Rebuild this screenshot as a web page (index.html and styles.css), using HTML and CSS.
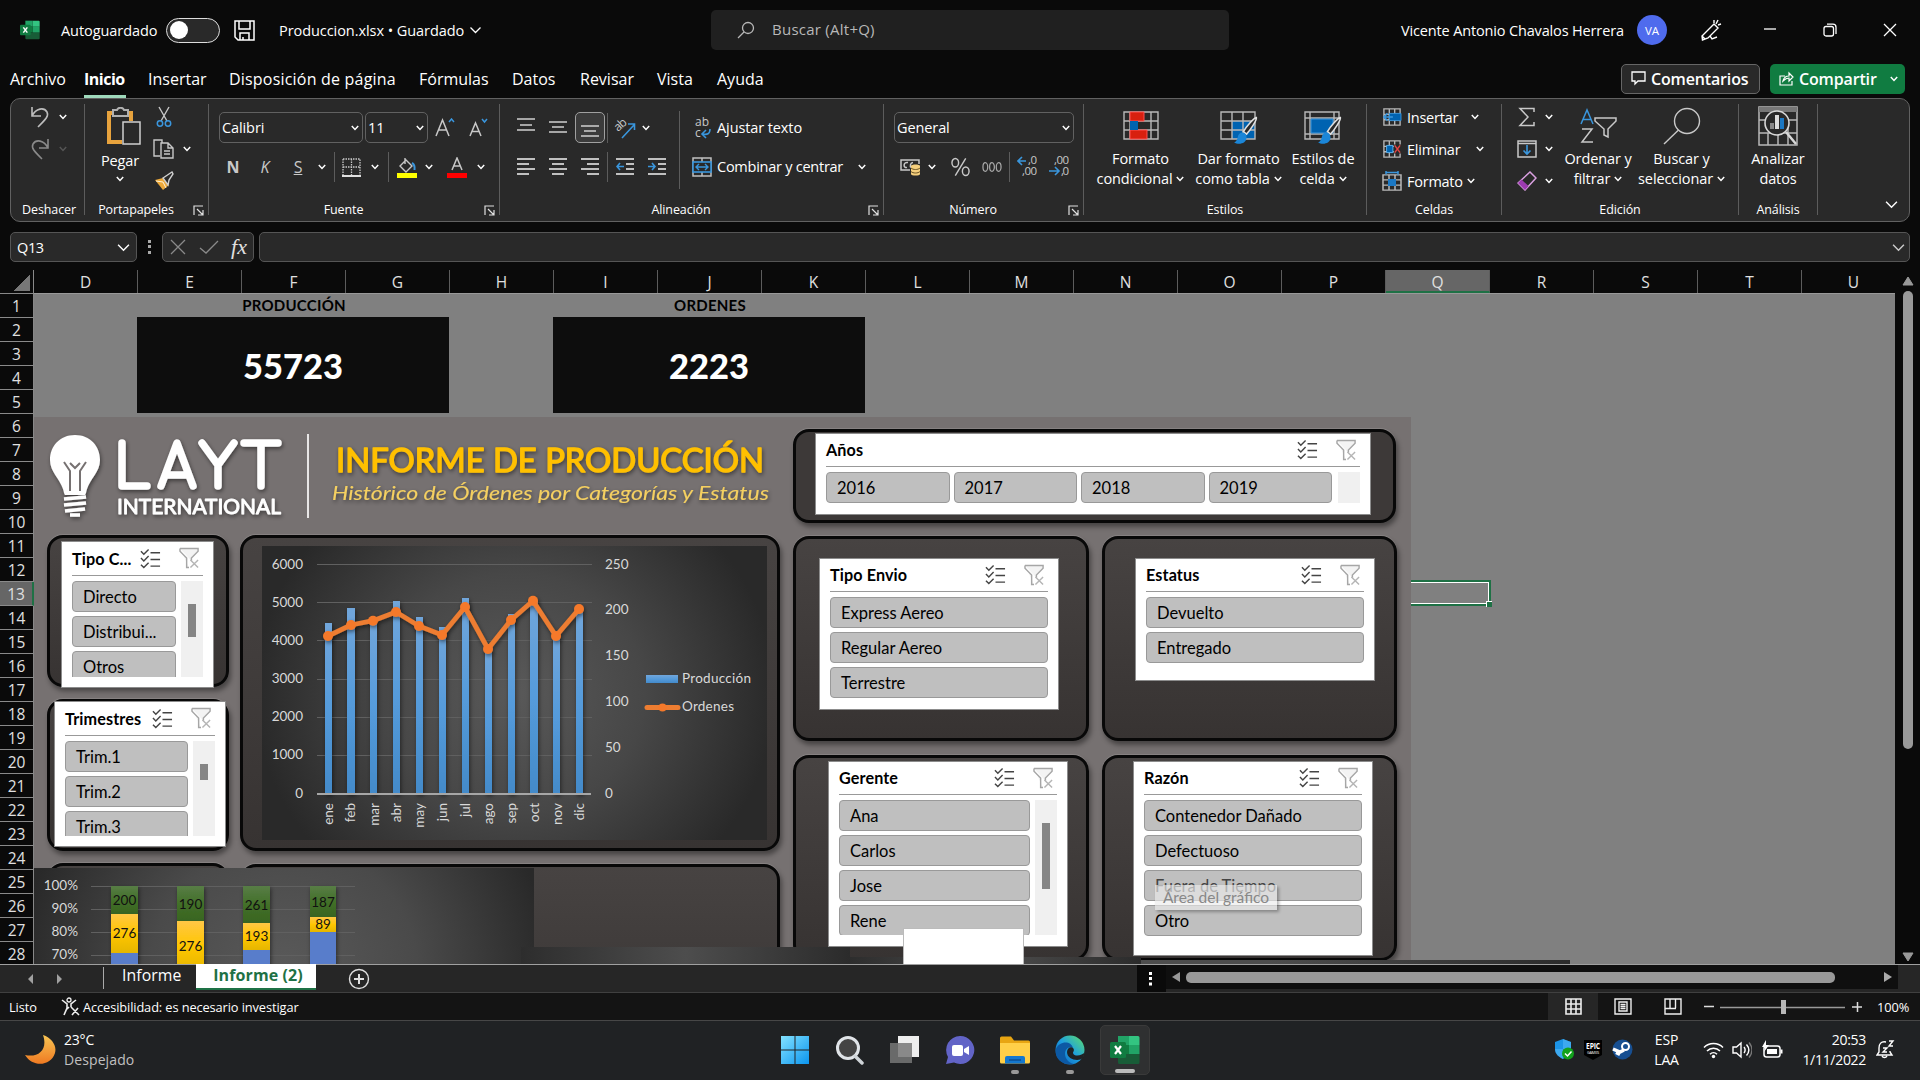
FILE: index.html
```html
<!DOCTYPE html>
<html lang="es">
<head>
<meta charset="utf-8">
<title>Produccion.xlsx - Excel</title>
<link rel="stylesheet" href="styles.css">
</head>
<body>
<svg class="defs" width="0" height="0">
  <defs>
    <linearGradient id="barBlue" x1="0" y1="0" x2="0" y2="1"><stop offset="0" stop-color="#71a6db"/><stop offset=".5" stop-color="#559bdb"/><stop offset="1" stop-color="#438ac9"/></linearGradient>
    <linearGradient id="barGreen" x1="0" y1="0" x2="0" y2="1"><stop offset="0" stop-color="#587d46"/><stop offset=".5" stop-color="#437029"/><stop offset="1" stop-color="#386420"/></linearGradient>
    <linearGradient id="barYellow" x1="0" y1="0" x2="0" y2="1"><stop offset="0" stop-color="#ffc746"/><stop offset=".5" stop-color="#ffc600"/><stop offset="1" stop-color="#e5b600"/></linearGradient>
    <linearGradient id="winBlue" x1="0" y1="0" x2="1" y2="1"><stop offset="0" stop-color="#83e2ff"/><stop offset="1" stop-color="#0b95ee"/></linearGradient>
    <linearGradient id="moonG" x1="0" y1="0" x2="0" y2="1"><stop offset="0" stop-color="#f8c553"/><stop offset="1" stop-color="#ef7a22"/></linearGradient>
    <linearGradient id="edgeG" x1="0" y1="1" x2="1" y2="0"><stop offset="0" stop-color="#0b59b5"/><stop offset=".5" stop-color="#1d9fe0"/><stop offset="1" stop-color="#5fe069"/></linearGradient>
    <filter id="soft" x="-20%" y="-20%" width="140%" height="140%"><feDropShadow dx="1" dy="2" stdDeviation="2" flood-color="#000" flood-opacity=".5"/></filter>
  </defs>
  <symbol id="chev" viewBox="0 0 8 6"><path d="M.8 1l3.2 3.4L7.2 1" fill="none" stroke="currentColor" stroke-width="1.500"/></symbol>
  <symbol id="chevthin" viewBox="0 0 12 8"><path d="M1 1.500l5 5 5-5" fill="none" stroke="currentColor" stroke-width="1.300"/></symbol>
  <symbol id="launch" viewBox="0 0 11 11"><path d="M1 10V1h9M4 4l6 6M10 5v5H5" fill="none" stroke="#e0e0e0" stroke-width="1.200"/></symbol>
  <symbol id="excel" viewBox="0 0 30 30"><path d="M8 1h11v9H8z" fill="#21a366"/><path d="M19 1h9a1.500 1.500 0 0 1 1.500 1.500V10H19z" fill="#33c481"/><path d="M8 10h11v9H8z" fill="#107c41"/><path d="M19 10h10.500v9H19z" fill="#21a366"/><path d="M8 19h21.500v8.500A1.500 1.500 0 0 1 28 29H9.500A1.500 1.500 0 0 1 8 27.500z" fill="#185c37"/><rect x="0" y="7" width="16" height="16" rx="1.500" fill="#107c41"/><path d="M5 11l6 8M11 11l-6 8" stroke="#fff" stroke-width="2.200"/></symbol>
  <symbol id="multi" viewBox="0 0 22 21"><path d="M1 3l3 3 5-5M1 10l3 3 5-5M1 17l3 3 5-5M11 4.500h10M11 11.500h10M11 18.500h10" fill="none" stroke="#444" stroke-width="1.500"/></symbol>
  <symbol id="nofilter" viewBox="0 0 22 22"><path d="M1 1h19v3l-7 7v3M1 1v3l7 7v10h2.500" fill="#f3f3f3" stroke="#a6a6a6" stroke-width="1.500"/><path d="M12 13l8 8M20 13l-8 8" stroke="#b5b5b5" stroke-width="1.500"/></symbol>
  <symbol id="cellgrid" viewBox="0 0 20 20"><path d="M1 1h18v18H1zM1 7h18M1 13h18M7 1v18M13 1v18" fill="none" stroke="#b8b8b8" stroke-width="1.500"/></symbol>
  <symbol id="brush" viewBox="0 0 24 28"><path d="M22.500 1.500C23 4 17 13 13 17.500l-3-2.500C13 10 20 2 22.500 1.500z" fill="#292929" stroke="#e0e0e0" stroke-width="1.500"/><path d="M9.500 16c-3 0-4.500 2-5 4.500C4 23 3 25 1 25.500c4 2.500 12 1.500 12-5 0-2-1-4-3.500-4.500z" fill="#1b86d8"/></symbol>
</svg>

<header class="titlebar">
  <svg class="app-icon" width="20" height="20"><use href="#excel"/></svg>
  <span class="t-auto">Autoguardado</span>
  <span class="toggle"><i></i></span>
  <svg class="save" width="21" height="21" viewBox="0 0 21 21"><path d="M1 1h19v19H4l-3-3zM5 1v8h11V1M6 20v-7h9v7M9 20v-3" fill="none" stroke="#fff" stroke-width="1.500"/></svg>
  <span class="t-file">Produccion.xlsx • Guardado</span>
  <svg class="file-chev" width="13" height="8"><use href="#chevthin"/></svg>
  <div class="search">
    <svg width="18" height="18" viewBox="0 0 18 18"><circle cx="11" cy="7" r="5.500" fill="none" stroke="#b8b8b8" stroke-width="1.300"/><path d="M7 11l-6 6" stroke="#b8b8b8" stroke-width="1.300"/></svg>
    <span>Buscar (Alt+Q)</span>
  </div>
  <span class="user">Vicente Antonio Chavalos Herrera</span>
  <span class="avatar">VA</span>
  <svg class="pen" width="22" height="22" viewBox="0 0 22 22"><path d="M2 17L14 5l4 4L8 19l-5.500 2zM5 20l-3-3M10 17l2 3 5-2M14 1v3M18 1l-2 4M21 5l-3 1" fill="none" stroke="#fff" stroke-width="1.400"/></svg>
  <svg class="wb" width="14" height="14" viewBox="0 0 14 14"><path d="M1 6h12" stroke="#fff" stroke-width="1.300"/></svg>
  <svg class="wb" width="14" height="14" viewBox="0 0 14 14"><rect x="1" y="3.500" width="9.500" height="9.500" rx="2" fill="none" stroke="#fff" stroke-width="1.300"/><path d="M4 1.200h6a3 3 0 0 1 3 3V11" fill="none" stroke="#fff" stroke-width="1.300"/></svg>
  <svg class="wb" width="14" height="14" viewBox="0 0 14 14"><path d="M1 1l12 12M13 1L1 13" stroke="#fff" stroke-width="1.300"/></svg>
</header>

<nav class="tabs">
  <span>Archivo</span><span class="on">Inicio</span><span>Insertar</span><span class="disp">Disposición de página</span><span>Fórmulas</span><span>Datos</span><span>Revisar</span><span>Vista</span><span>Ayuda</span>
  <span class="btn comments"><svg width="15" height="15" viewBox="0 0 15 15"><path d="M1 1h13v9H7l-3 3v-3H1z" fill="none" stroke="#fff" stroke-width="1.300"/></svg>Comentarios</span>
  <span class="btn share"><svg width="15" height="15" viewBox="0 0 15 15"><path d="M6 5H1v9h12v-4M4 10c1-4 3-5 6-5V2l4 4-4 4V7C8 7 6 8 4 10z" fill="none" stroke="#fff" stroke-width="1.200"/></svg>Compartir<svg class="sc" width="8" height="6"><use href="#chev"/></svg></span>
</nav>

<section class="ribbon">
  <div class="group g-undo">
    <div class="body">
      <div class="r-undo"><svg width="20" height="22" viewBox="0 0 20 22"><path d="M2 1v9h9M2 10C6 2 14 1 17 6c2 4-1 7-9 15" fill="none" stroke="#bdbdbd" stroke-width="1.600"/></svg><svg width="8" height="6"><use href="#chev"/></svg></div>
      <div class="r-undo dim"><svg width="20" height="22" viewBox="0 0 20 22"><path d="M18 1v9H9M18 10C14 2 6 1 3 6c-2 4 1 7 9 15" fill="none" stroke="#8a8a8a" stroke-width="1.600"/></svg><svg width="8" height="6"><use href="#chev"/></svg></div>
    </div>
    <div class="label">Deshacer</div>
  </div>
  <div class="group g-clip">
    <div class="body">
      <div class="big paste">
        <svg width="36" height="39" viewBox="0 0 36 39"><path d="M7 6H3v29h13M25 14V6h-4" fill="none" stroke="#e8a33d" stroke-width="4"/><path d="M7 3h4c1-3 6-3 7 0h4v6H7z" fill="#292929" stroke="#b0b0b0" stroke-width="2"/><rect x="17" y="15" width="17" height="22" fill="#292929" stroke="#d0d0d0" stroke-width="1.500"/></svg>
        <span>Pegar</span><svg width="8" height="6"><use href="#chev"/></svg>
      </div>
      <div class="col">
        <div class="r-clip"><svg width="16" height="22" viewBox="0 0 16 22"><path d="M3 1l8 14M13 1L5 15" stroke="#c8c8c8" stroke-width="1.400"/><circle cx="4" cy="17.500" r="2.700" fill="none" stroke="#3a96dd" stroke-width="1.500"/><circle cx="12" cy="17.500" r="2.700" fill="none" stroke="#3a96dd" stroke-width="1.500"/></svg></div>
        <div class="r-clip"><svg width="22" height="20" viewBox="0 0 22 20"><path d="M7 17H1V1h8v3M8 4h7l5 5v10H8zM15 4v5h5M11 12h6M11 15h6" fill="none" stroke="#c8c8c8" stroke-width="1.400"/></svg><svg width="8" height="6"><use href="#chev"/></svg></div>
        <div class="r-clip"><svg width="20" height="20" viewBox="0 0 20 20"><path d="M1 9l8-2 6 7-6 5z" fill="#eba83a"/><path d="M2 10l7 1 3 6" fill="none" stroke="#fff3d6"/><path d="M9 7l3-2 6-4 1 2-4 6-1 5z" fill="#292929" stroke="#d0d0d0" stroke-width="1.400"/></svg></div>
      </div>
    </div>
    <div class="label">Portapapeles<svg width="11" height="11"><use href="#launch"/></svg></div>
  </div>
  <div class="group g-font">
    <div class="body stack">
      <div class="r-font1">
        <div class="combo">Calibri<svg width="8" height="6"><use href="#chev"/></svg></div>
        <div class="combo">11<svg width="8" height="6"><use href="#chev"/></svg></div>
        <svg width="20" height="20" viewBox="0 0 20 20"><path d="M1 18L7.500 2 14 18M3.500 12h8" fill="none" stroke="#c8c8c8" stroke-width="1.500"/><path d="M14 4l2.500-3L19 4" fill="none" stroke="#3a96dd" stroke-width="1.500"/></svg>
        <svg width="20" height="20" viewBox="0 0 20 20"><path d="M1 18L6.500 5 12 18M3 13.500h7" fill="none" stroke="#c8c8c8" stroke-width="1.500"/><path d="M13 1l2.500 3L18 1" fill="none" stroke="#3a96dd" stroke-width="1.500"/></svg>
      </div>
      <div class="r-font2">
        <b>N</b><i>K</i><u>S</u><svg width="8" height="6"><use href="#chev"/></svg><em class="end"></em>
        <svg width="19" height="19" viewBox="0 0 19 19"><path d="M1 1h17v16M1 1v16M9.500 1v16M1 9h17" fill="none" stroke="#c8c8c8" stroke-width="1.300" stroke-dasharray="1.500 1"/><path d="M0 18h19" stroke="#e0e0e0" stroke-width="2"/></svg>
        <svg width="8" height="6"><use href="#chev"/></svg><em></em>
        <svg width="22" height="21" viewBox="0 0 22 21"><path d="M9 1v6M10 3l6 6-6 6-6-6z" fill="none" stroke="#c8c8c8" stroke-width="1.400"/><path d="M16 6c2 1 3 3 2.500 7" fill="none" stroke="#3a96dd" stroke-width="2"/><path d="M1 16h20v5H1z" fill="#ff0"/></svg>
        <svg width="8" height="6"><use href="#chev"/></svg>
        <svg width="20" height="21" viewBox="0 0 20 21"><path d="M5 13l5-12 5 12M6.500 9h7" fill="none" stroke="#c8c8c8" stroke-width="1.500"/><path d="M0 16h20v5H0z" fill="red"/></svg>
        <svg width="8" height="6"><use href="#chev"/></svg>
      </div>
    </div>
    <div class="label">Fuente<svg width="11" height="11"><use href="#launch"/></svg></div>
  </div>
  <div class="group g-align">
    <div class="body">
      <div class="stack">
        <div class="r-al">
          <svg width="18" height="20" viewBox="0 0 18 20"><path d="M0 1h18M3 7h12M0 12h18" stroke="#d0d0d0" stroke-width="1.500"/></svg>
          <svg width="18" height="20" viewBox="0 0 18 20"><path d="M0 4h18M3 9h12M0 14h18" stroke="#d0d0d0" stroke-width="1.500"/></svg>
          <span class="sel"><svg width="18" height="20" viewBox="0 0 18 20"><path d="M0 8h18M3 13h12M0 18h18" stroke="#d0d0d0" stroke-width="1.500"/></svg></span><em></em>
          <svg width="22" height="22" viewBox="0 0 22 22"><text x="4" y="15" transform="rotate(-42 4 15)" font-size="12" textLength="13" fill="#c8c8c8">ab</text><path d="M8 21L20 8M14 7h6.500v6" fill="none" stroke="#3a96dd" stroke-width="1.600"/></svg>
          <svg width="8" height="6"><use href="#chev"/></svg>
        </div>
        <div class="r-al r-al2">
          <svg width="18" height="18" viewBox="0 0 18 18"><path d="M0 1h18M0 6h12M0 11h18M0 16h12" stroke="#c0c0c0" stroke-width="1.800"/></svg>
          <svg width="18" height="18" viewBox="0 0 18 18"><path d="M0 1h18M3 6h12M0 11h18M3 16h12" stroke="#c0c0c0" stroke-width="1.800"/></svg>
          <svg width="18" height="18" viewBox="0 0 18 18"><path d="M0 1h18M6 6h12M0 11h18M6 16h12" stroke="#c0c0c0" stroke-width="1.800"/></svg><em></em>
          <svg width="18" height="18" viewBox="0 0 18 18"><path d="M0 1h18M10 6h8M10 11h8M0 16h18" stroke="#c0c0c0" stroke-width="1.800"/><path d="M8 8.500H1M4 5L1 8.500 4 12" fill="none" stroke="#3a96dd" stroke-width="1.600"/></svg>
          <svg width="18" height="18" viewBox="0 0 18 18"><path d="M0 1h18M10 6h8M10 11h8M0 16h18" stroke="#c0c0c0" stroke-width="1.800"/><path d="M0 8.500h7M4 5l3 3.500L4 12" fill="none" stroke="#3a96dd" stroke-width="1.600"/></svg>
        </div>
      </div>
      <em class="tall"></em>
      <div class="stack wide">
        <div class="r-w1"><svg width="20" height="22" viewBox="0 0 20 22"><text x="3" y="9" font-size="12" textLength="14" fill="#c8c8c8">ab</text><text x="3" y="20" font-size="12" fill="#c8c8c8">c</text><path d="M18 12c0 5-3 6-7 5M14 13l-4 4 4 4" fill="none" stroke="#3a96dd" stroke-width="1.600"/></svg><span>Ajustar texto</span></div>
        <div class="r-w1"><svg width="20" height="20" viewBox="0 0 20 20"><path d="M1 1h18v18H1zM10 1v18" fill="none" stroke="#c0c0c0" stroke-width="1.500"/><rect x="1" y="5" width="18" height="10" fill="#292929" stroke="#3a96dd" stroke-width="1.600"/><path d="M4 10h12M7 7l-3 3 3 3M13 7l3 3-3 3" fill="none" stroke="#3a96dd" stroke-width="1.400"/></svg><span class="comb">Combinar y centrar</span><svg width="8" height="6"><use href="#chev"/></svg></div>
      </div>
    </div>
    <div class="label">Alineación<svg width="11" height="11"><use href="#launch"/></svg></div>
  </div>
  <div class="group g-num">
    <div class="body stack">
      <div class="r-num1"><div class="combo">General<svg width="8" height="6"><use href="#chev"/></svg></div></div>
      <div class="r-num2">
        <svg width="21" height="20" viewBox="0 0 21 20"><path d="M10 13H1V3h18v4M8 5.500c-5-1-5 6-1 5M13 5.500c-3 0-3 4-2 5" fill="none" stroke="#c8c8c8" stroke-width="1.500"/><path d="M11 9c0-2 9-2 9 0v8c0 2-9 2-9 0z" fill="#f5cf7d"/><path d="M11 11c2 2 7 2 9 0M11 14.500c2 2 7 2 9 0" fill="none" stroke="#6b5425"/></svg>
        <svg width="8" height="6"><use href="#chev"/></svg>
        <svg width="19" height="20" viewBox="0 0 20 20"><ellipse cx="4.500" cy="5.500" rx="3.500" ry="4.500" fill="none" stroke="#c8c8c8" stroke-width="1.500"/><ellipse cx="15.500" cy="14.500" rx="3.500" ry="4.500" fill="none" stroke="#c8c8c8" stroke-width="1.500"/><path d="M15.500 1l-11 18" stroke="#c8c8c8" stroke-width="1.500"/></svg>
        <svg width="20" height="12" viewBox="0 0 21 12"><path d="M1 6a2.500 4.500 0 0 1 5 0a2.500 4.500 0 0 1-5 0zM8 6a2.500 4.500 0 0 1 5 0a2.500 4.500 0 0 1-5 0zM15 6a2.500 4.500 0 0 1 5 0a2.500 4.500 0 0 1-5 0z" fill="none" stroke="#a8a8a8" stroke-width="1.300"/></svg>
        <em></em>
        <svg width="21" height="22" viewBox="0 0 21 22"><text x="11" y="8" font-size="11.500" fill="#c8c8c8" textLength="9">,0</text><text x="5" y="19" font-size="11.500" fill="#c8c8c8" textLength="15">,00</text><path d="M9 5H1M5 1L1 5l4 4" fill="none" stroke="#3a96dd" stroke-width="1.600"/></svg>
        <svg width="21" height="22" viewBox="0 0 21 22"><text x="5" y="8" font-size="11.500" fill="#c8c8c8" textLength="15">,00</text><text x="12" y="19" font-size="11.500" fill="#c8c8c8" textLength="8">,0</text><path d="M0 15h10M6 11l4 4-4 4" fill="none" stroke="#3a96dd" stroke-width="1.600"/></svg>
      </div>
    </div>
    <div class="label">Número<svg width="11" height="11"><use href="#launch"/></svg></div>
  </div>
  <div class="group g-styles">
    <div class="body">
      <div class="big"><svg width="36" height="38" viewBox="0 0 36 38"><path d="M1 5h34v27H1zM1 14h34M1 23h34M7 5v27M14 5v27M28 5v27" fill="none" stroke="#b8b8b8" stroke-width="1.400"/><path d="M7 5h14v9H7zM7 23h17v9H7z" fill="#d8200f" stroke="#ff5050"/><path d="M7 14h8v9H7z" fill="#0063b1"/></svg><span>Formato</span><span>condicional<svg width="8" height="6"><use href="#chev"/></svg></span></div>
      <div class="big"><svg width="38" height="38" viewBox="0 0 38 38"><path d="M12 14h23v18H12z" fill="#0063b1"/><path d="M1 5h34v27H1zM1 14h34M1 23h34M12 5v27M23 5v27" fill="none" stroke="#b8b8b8" stroke-width="1.400"/><use href="#brush" x="13" y="9" width="25" height="29"/></svg><span>Dar formato</span><span>como tabla<svg width="8" height="6"><use href="#chev"/></svg></span></div>
      <div class="big"><svg width="38" height="38" viewBox="0 0 38 38"><path d="M1 5h34v27H1zM1 11h34M6 5v27M30 5v27M1 27h34" fill="none" stroke="#b8b8b8" stroke-width="1.400"/><path d="M7 12h22v14H7z" fill="#0063b1" stroke="#3a96dd"/><use href="#brush" x="13" y="9" width="25" height="29"/></svg><span>Estilos de</span><span>celda<svg width="8" height="6"><use href="#chev"/></svg></span></div>
    </div>
    <div class="label">Estilos</div>
  </div>
  <div class="group g-cells">
    <div class="body triple">
      <div class="r-cell c1"><svg width="20" height="18" viewBox="0 0 20 20"><use href="#cellgrid"/><path d="M7 6h13v8H7z" fill="#0063b1" stroke="#3a96dd"/><path d="M11 10H1M5 6l-4 4 4 4" fill="none" stroke="#3a96dd" stroke-width="1.700"/></svg><span>Insertar</span><svg width="8" height="6"><use href="#chev"/></svg></div>
      <div class="r-cell c2"><svg width="20" height="18" viewBox="0 0 20 20"><use href="#cellgrid"/><path d="M12 5h8v10h-8z" fill="#292929"/><path d="M4 6h7v8H4z" fill="#0063b1" stroke="#60b5f0"/><path d="M13 6l6 8M19 6l-6 8" stroke="#e84545" stroke-width="1.600"/></svg><span>Eliminar</span><svg width="8" height="6"><use href="#chev"/></svg></div>
      <div class="r-cell c3"><svg width="20" height="20" viewBox="0 0 20 20"><g transform="translate(0,3) scale(1,.85)"><use href="#cellgrid" width="20" height="20"/></g><path d="M4 1.500h12M4 0v3.500M16 0v3.500" stroke="#3a96dd" stroke-width="1.500"/><path d="M6 8h8v7H6z" fill="#1b78c4"/></svg><span>Formato</span><svg width="8" height="6"><use href="#chev"/></svg></div>
    </div>
    <div class="label">Celdas</div>
  </div>
  <div class="group g-edit">
    <div class="body">
      <div class="col">
        <div class="r-ed"><svg width="18" height="20" viewBox="0 0 18 20"><path d="M16 5V1.500H2L10 10 2 18.500h14V15" fill="none" stroke="#c8c8c8" stroke-width="1.500"/></svg><svg width="8" height="6"><use href="#chev"/></svg></div>
        <div class="r-ed"><svg width="20" height="18" viewBox="0 0 20 18"><path d="M1 1h18v16H1zM1 3.500h18" fill="none" stroke="#c8c8c8" stroke-width="1.500"/><path d="M10 5v9M6.500 10.500L10 14l3.500-3.500" fill="none" stroke="#3a96dd" stroke-width="1.600"/></svg><svg width="8" height="6"><use href="#chev"/></svg></div>
        <div class="r-ed"><svg width="20" height="20" viewBox="0 0 20 20"><path d="M13 1l6 6-11 12-7-7z" fill="none" stroke="#d9a0e0" stroke-width="1.500"/><path d="M4.500 8.500L11.500 15 8 19l-7-7z" fill="#9c3bb0"/></svg><svg width="8" height="6"><use href="#chev"/></svg></div>
      </div>
      <div class="big"><svg width="38" height="38" viewBox="0 0 38 38"><path d="M2 17L8 3l6 14M4 12.500h8" fill="none" stroke="#3a96dd" stroke-width="1.500"/><path d="M3 22h10L3 35h11" fill="none" stroke="#c8c8c8" stroke-width="1.500"/><path d="M16 11h21v3l-8 8v8l-4-2v-6l-9-8z" fill="none" stroke="#c8c8c8" stroke-width="1.500"/></svg><span>Ordenar y</span><span>filtrar<svg width="8" height="6"><use href="#chev"/></svg></span></div>
      <div class="big"><svg width="38" height="38" viewBox="0 0 38 38"><circle cx="24" cy="14" r="12.500" fill="none" stroke="#c8c8c8" stroke-width="1.400"/><path d="M15.500 23L1 37" stroke="#c8c8c8" stroke-width="1.400"/></svg><span>Buscar y</span><span>seleccionar<svg width="8" height="6"><use href="#chev"/></svg></span></div>
    </div>
    <div class="label">Edición</div>
  </div>
  <div class="group g-an">
    <div class="body">
      <div class="big"><svg width="40" height="40" viewBox="0 0 40 40"><path d="M1 1h38v38H1zM1 14h38M1 27h38M10 27v12M20 27v12M30 20v19" fill="none" stroke="#b8b8b8" stroke-width="1.500"/><path d="M1 1h38v5H1z" fill="#777"/><circle cx="19" cy="17" r="12" fill="#292929" stroke="#d8d8d8" stroke-width="1.600"/><path d="M12 17h4v6h-4z" fill="#888"/><path d="M17 9h4v14h-4z" fill="#ddd"/><path d="M22 12h4v11h-4z" fill="#1b78c4"/><path d="M28 26l10 12" stroke="#d8d8d8" stroke-width="2.500"/></svg><span>Analizar</span><span>datos</span></div>
    </div>
    <div class="label">Análisis</div>
  </div>
  <svg class="collapse" width="13" height="9"><use href="#chevthin"/></svg>
</section>

<section class="formula">
  <div class="fbox name">Q13<svg width="13" height="9"><use href="#chevthin"/></svg></div>
  <svg class="dots" width="4" height="16" viewBox="0 0 4 16"><path d="M0 1h3v3H0zM0 6h3v3H0zM0 12h3v3H0z" fill="#aaa"/></svg>
  <div class="fbox fx"><svg width="16" height="16" viewBox="0 0 16 16"><path d="M1 1l14 14M15 1L1 15" stroke="#8a8a8a" stroke-width="1.300"/></svg><svg width="20" height="14" viewBox="0 0 20 14"><path d="M1 8l6 5L19 1" fill="none" stroke="#8a8a8a" stroke-width="1.300"/></svg><i>fx</i></div>
  <div class="fbox bar"><svg width="13" height="9"><use href="#chevthin"/></svg></div>
</section>

<main class="sheet">
  <div class="left">
    <div class="corner"></div>
    <div class="rows"><span>1</span><span>2</span><span>3</span><span>4</span><span>5</span><span>6</span><span>7</span><span>8</span><span>9</span><span>10</span><span>11</span><span>12</span><span class="on">13</span><span>14</span><span>15</span><span>16</span><span>17</span><span>18</span><span>19</span><span>20</span><span>21</span><span>22</span><span>23</span><span>24</span><span>25</span><span>26</span><span>27</span><span>28</span></div>
  </div>
  <div class="mid">
    <div class="cols"><span>D</span><span>E</span><span>F</span><span>G</span><span>H</span><span>I</span><span>J</span><span>K</span><span>L</span><span>M</span><span>N</span><span>O</span><span>P</span><span class="on">Q</span><span>R</span><span>S</span><span>T</span><span>U</span></div>
    <div class="canvas">
      <div class="kpis">
        <div class="kpi"><b>PRODUCCIÓN</b><div>55723</div></div>
        <div class="kpi"><b>ORDENES</b><div>2223</div></div>
      </div>
      <div class="cellsel"><i></i></div>
      <div class="dash"></div>
      <svg class="brand" width="760" height="110" viewBox="34 422 760 110">
        <g filter="url(#soft)">
          <path d="M75 435c-15 0-25 11-25 25 0 12 10 19 13 29 1 3 1 5 2 6h20c1-1 1-3 2-6 3-10 13-17 13-29 0-14-10-25-25-25z" fill="#fff"/>
          <path d="M64 462l6 9v20M86 462l-6 9v20M70 463l5 5 5-5" fill="none" stroke="#767171" stroke-width="2"/>
          <path d="M64 499l22-2M64 505l22-2M65 511l20-2M70 515h10" stroke="#fff" stroke-width="3.500"/>
          <g fill="none" stroke="#fff" stroke-width="7.500" stroke-linecap="round" stroke-linejoin="round"><path d="M122 443v43h25"/><path d="M161 486l16-43 16 43M167 475h20"/><path d="M202 443l16 22 16-22M218 465v21"/><path d="M244 443h34M261 443v43"/></g>
          <text x="117" y="513.500" textLength="164" lengthAdjust="spacingAndGlyphs" font-size="21" fill="#fff" stroke="#fff" stroke-width=".9" stroke-linejoin="round">INTERNATIONAL</text>
          <text x="336" y="472" textLength="428" lengthAdjust="spacingAndGlyphs" font-size="32" fill="#ffc000" stroke="#ffc000" stroke-width="1.300" stroke-linejoin="round">INFORME DE PRODUCCIÓN</text>
          <text x="332" y="500" textLength="437" lengthAdjust="spacingAndGlyphs" font-size="20" font-style="italic" fill="#f5d060">Histórico de Órdenes por Categorías y Estatus</text>
        </g>
        <path d="M308 434v84" stroke="#e8e6e6" stroke-width="2"/>
      </svg>
      <div class="panel p-anos"></div><div class="panel p-envio"></div><div class="panel p-estatus"></div><div class="panel p-gerente"></div><div class="panel p-razon"></div><div class="panel p-tipo"></div><div class="panel p-trim"></div><div class="panel p-chart"></div><div class="panel p-low1"></div><div class="panel p-low2"></div>

      <svg class="chart" width="505" height="294" viewBox="262 546 505 294">
        <path d="M317 564.500h275M317 602.500h275M317 640.500h275M317 679.500h275M317 717.500h275M317 755.500h275" stroke="#606060"/>
        <g fill="url(#barBlue)" filter="url(#soft)"><rect x="325" y="623" width="7" height="171"/><rect x="347" y="608" width="8" height="186"/><rect x="370" y="622" width="7" height="172"/><rect x="393" y="601" width="7" height="193"/><rect x="416" y="617" width="7" height="177"/><rect x="439" y="627" width="7" height="167"/><rect x="462" y="598" width="7" height="196"/><rect x="485" y="650" width="7" height="144"/><rect x="508" y="614" width="7" height="180"/><rect x="530" y="601" width="8" height="193"/><rect x="553" y="637" width="7" height="157"/><rect x="576" y="612" width="7" height="182"/></g>
        <path d="M317 794h274" stroke="#a6a6a6" stroke-width="2"/>
        <g filter="url(#soft)"><path d="M328 636L351 625L373 620.700L396 612L419 626L442 635L465 607L488 649L511 620L533 600.700L556 636L579 609" fill="none" stroke="#ed7d31" stroke-width="4.800" stroke-linejoin="round"/>
        <g fill="#f5792a"><circle cx="328" cy="636" r="5"/><circle cx="351" cy="625" r="5"/><circle cx="373" cy="620.700" r="5"/><circle cx="396" cy="612" r="5"/><circle cx="419" cy="626" r="5"/><circle cx="442" cy="635" r="5"/><circle cx="465" cy="607" r="5"/><circle cx="488" cy="649" r="5"/><circle cx="511" cy="620" r="5"/><circle cx="533" cy="600.700" r="5"/><circle cx="556" cy="636" r="5"/><circle cx="579" cy="609" r="5"/></g></g>
        <g class="ax" text-anchor="end"><text x="303" y="568.500">6000</text><text x="303" y="607">5000</text><text x="303" y="645">4000</text><text x="303" y="683">3000</text><text x="303" y="721">2000</text><text x="303" y="759">1000</text><text x="303" y="798">0</text></g>
        <g class="ax"><text x="605" y="568.500">250</text><text x="605" y="614">200</text><text x="605" y="660">150</text><text x="605" y="706">100</text><text x="605" y="752">50</text><text x="605" y="798">0</text></g>
        <g class="ax" text-anchor="end"><text transform="translate(333,803) rotate(-90)">ene</text><text transform="translate(355,803) rotate(-90)">feb</text><text transform="translate(378.500,803) rotate(-90)">mar</text><text transform="translate(401,803) rotate(-90)">abr</text><text transform="translate(424,803) rotate(-90)">may</text><text transform="translate(447,803) rotate(-90)">jun</text><text transform="translate(470,803) rotate(-90)">jul</text><text transform="translate(493,803) rotate(-90)">ago</text><text transform="translate(516,803) rotate(-90)">sep</text><text transform="translate(538.500,803) rotate(-90)">oct</text><text transform="translate(562,803) rotate(-90)">nov</text><text transform="translate(584,803) rotate(-90)">dic</text></g>
        <rect x="646" y="675" width="32" height="8" fill="url(#barBlue)"/><path d="M647 707.500h31" stroke="#ed7d31" stroke-width="5" stroke-linecap="round"/><circle cx="662.500" cy="707.500" r="4" fill="#f5792a"/>
        <g class="ax"><text x="682" y="683" textLength="69">Producción</text><text x="682" y="711" textLength="52">Ordenes</text></g>
      </svg>

      <div class="slicer s-anos"><header><b>Años</b><svg width="21" height="21"><use href="#multi"/></svg><svg width="21" height="22"><use href="#nofilter"/></svg></header><div class="items"><div class="list"><span>2016</span><span>2017</span><span>2018</span><span>2019</span></div><div class="scroll"></div></div></div>
      <div class="slicer s-envio"><header><b>Tipo Envio</b><svg width="21" height="21"><use href="#multi"/></svg><svg width="21" height="22"><use href="#nofilter"/></svg></header><div class="items"><div class="list"><span>Express Aereo</span><span>Regular Aereo</span><span>Terrestre</span></div></div></div>
      <div class="slicer s-estatus"><header><b>Estatus</b><svg width="21" height="21"><use href="#multi"/></svg><svg width="21" height="22"><use href="#nofilter"/></svg></header><div class="items"><div class="list"><span>Devuelto</span><span>Entregado</span></div></div></div>
      <div class="slicer s-gerente"><header><b>Gerente</b><svg width="21" height="21"><use href="#multi"/></svg><svg width="21" height="22"><use href="#nofilter"/></svg></header><div class="items"><div class="list"><span>Ana</span><span>Carlos</span><span>Jose</span><span>Rene</span></div><div class="scroll"><i></i></div></div></div>
      <div class="slicer s-razon"><header><b>Razón</b><svg width="21" height="21"><use href="#multi"/></svg><svg width="21" height="22"><use href="#nofilter"/></svg></header><div class="items"><div class="list"><span>Contenedor Dañado</span><span>Defectuoso</span><span class="faded">Fuera de Tiempo</span><span>Otro</span></div></div></div>
      <div class="slicer s-tipo"><header><b>Tipo C...</b><svg width="21" height="21"><use href="#multi"/></svg><svg width="21" height="22"><use href="#nofilter"/></svg></header><div class="items"><div class="list"><span>Directo</span><span>Distribui...</span><span>Otros</span></div><div class="scroll"><i></i></div></div></div>
      <div class="slicer s-trim"><header><b>Trimestres</b><svg width="21" height="21"><use href="#multi"/></svg><svg width="21" height="22"><use href="#nofilter"/></svg></header><div class="items"><div class="list"><span>Trim.1</span><span>Trim.2</span><span>Trim.3</span></div><div class="scroll"><i></i></div></div></div>

      <div class="tip">Área del gráfico</div>
      <svg class="stacked" width="500" height="97" viewBox="34 868 500 97">
        <path d="M91 886.500h264M91 909.500h264M91 932.500h264M91 955.500h264" stroke="#606060"/>
        <g filter="url(#soft)"><rect x="111" y="886" width="27" height="28" fill="url(#barGreen)"/><rect x="111" y="914" width="27" height="39" fill="url(#barYellow)"/><rect x="111" y="953" width="27" height="20" fill="#587dcb"/>
        <rect x="177" y="886" width="27" height="35" fill="url(#barGreen)"/><rect x="177" y="921" width="27" height="50" fill="url(#barYellow)"/>
        <rect x="243" y="886" width="27" height="37" fill="url(#barGreen)"/><rect x="243" y="923" width="27" height="27" fill="url(#barYellow)"/><rect x="243" y="950" width="27" height="20" fill="#587dcb"/>
        <rect x="310" y="886" width="26" height="31" fill="url(#barGreen)"/><rect x="310" y="917" width="26" height="15" fill="url(#barYellow)"/><rect x="310" y="932" width="26" height="40" fill="#587dcb"/></g>
        <g class="ax" text-anchor="end"><text x="78" y="890">100%</text><text x="78" y="913">90%</text><text x="78" y="936">80%</text><text x="78" y="959">70%</text></g>
        <g class="ax dark" text-anchor="middle"><text x="124.500" y="905">200</text><text x="124.500" y="938">276</text><text x="190.500" y="909">190</text><text x="190.500" y="951">276</text><text x="256.500" y="910">261</text><text x="256.500" y="941">193</text><text x="323" y="907">187</text><text x="323" y="929">89</text></g>
      </svg>
      <div class="strip st3"></div><div class="strip st2"></div><div class="strip st1"></div>
      <div class="blank"></div>
    </div>
  </div>
  <div class="vscroll">
    <svg width="12" height="10" viewBox="0 0 12 10"><path d="M6 1l5 8H1z" fill="#999" stroke="#999" stroke-linejoin="round"/></svg><i></i>
    <svg width="12" height="10" viewBox="0 0 12 10"><path d="M6 9L1 1h10z" fill="#999" stroke="#999" stroke-linejoin="round"/></svg>
  </div>
</main>

<section class="sheettabs">
  <svg class="nav1" width="36" height="12" viewBox="0 0 36 12"><path d="M6 1v10L1 6zM30 1v10l5-5z" fill="#a0a0a0"/></svg>
  <span class="t1">Informe</span><span class="t2">Informe (2)</span>
  <svg class="plus" width="22" height="22" viewBox="0 0 22 22"><circle cx="11" cy="11" r="9.500" fill="none" stroke="#e0e0e0" stroke-width="1.400"/><path d="M11 6v10M6 11h10" stroke="#e0e0e0" stroke-width="2"/></svg>
  <div class="hdots"><svg width="3" height="14" viewBox="0 0 3 14"><path d="M0 0h3v3H0zM0 5h3v3H0zM0 10.500h3v3H0z" fill="#fff"/></svg></div>
  <div class="hscroll"><svg width="10" height="12" viewBox="0 0 10 12"><path d="M1 6l8-5v10z" fill="#999"/></svg><i></i><svg width="10" height="12" viewBox="0 0 10 12"><path d="M9 6L1 1v10z" fill="#aaa"/></svg></div>
</section>

<footer class="status">
  <span class="listo">Listo</span>
  <svg class="acc" width="19" height="19" viewBox="0 0 19 19"><circle cx="8" cy="3" r="2" fill="none" stroke="#eee" stroke-width="1.300"/><path d="M1 3l5 4v4L3 18M15 3l-5 4v3M6 12l2-2M10 10l8 8M17 11l-6 7" fill="none" stroke="#eee" stroke-width="1.600"/></svg>
  <span class="acct">Accesibilidad: es necesario investigar</span>
  <span class="view on"><svg width="17" height="17" viewBox="0 0 17 17"><path d="M1 1h15v15H1zM1 6h15M1 11h15M6 1v15M11 1v15" fill="none" stroke="#eee" stroke-width="1.600"/></svg></span>
  <span class="view"><svg width="18" height="17" viewBox="0 0 18 17"><path d="M1 1h16v15H1zM5 4h8v9H5zM6.500 6.500h5M6.500 8.500h5M6.500 10.500h5" fill="none" stroke="#eee" stroke-width="1.400"/></svg></span>
  <span class="view"><svg width="18" height="17" viewBox="0 0 18 17"><path d="M1 1h16v15H1zM6 1v9M11.500 1v9M1 10.500h11" fill="none" stroke="#eee" stroke-width="1.400"/></svg></span>
  <svg class="zoombar" width="158" height="16" viewBox="0 0 158 16"><path d="M0 7.500h10M148 8h11M153.500 3v10" stroke="#ddd" stroke-width="1.500"/><path d="M16 8.500h125" stroke="#999" stroke-width="1.500"/><path d="M77 1h5v14h-5z" fill="#b8b8b8"/></svg>
  <span class="pct">100%</span>
</footer>

<footer class="taskbar">
  <svg class="moon" width="31" height="30" viewBox="0 0 31 30"><path d="M18 0c9 3 14 11 12 18C26 31 8 33 0 20c14 3 23-6 18-20z" fill="url(#moonG)"/></svg>
  <div class="weather"><span>23°C</span><span>Despejado</span></div>
  <div class="apps">
    <span><svg width="30" height="30" viewBox="0 0 30 30"><path d="M1 1h13.500v13.500H1zM15.500 1H29v13.500H15.500zM1 15.500h13.500V29H1zM15.500 15.500H29V29H15.500z" fill="url(#winBlue)"/></svg></span>
    <span><svg width="28" height="30" viewBox="0 0 28 30"><circle cx="12" cy="13" r="10.500" fill="#444" stroke="#e0e4e8" stroke-width="3"/><path d="M19 21l7 7" stroke="#cfd4d8" stroke-width="3.500" stroke-linecap="round"/></svg></span>
    <span><svg width="30" height="30" viewBox="0 0 30 30"><path d="M8 1h21v21H8z" fill="#eee"/><path d="M0 8h22v20H0z" fill="#777" opacity=".85"/></svg></span>
    <span><svg width="30" height="30" viewBox="0 0 30 30"><path d="M15 1a14 14 0 1 1-6 26.500L1 29l2-7A14 14 0 0 1 15 1z" fill="#6264c7"/><rect x="7" y="10" width="11" height="11" rx="2" fill="#fff"/><path d="M19 14l5-3v9l-5-3z" fill="#fff"/></svg></span>
    <span class="run"><svg width="30" height="28" viewBox="0 0 30 28"><path d="M0 2a1.500 1.500 0 0 1 1.500-1.500H11l3 4H28.500A1.500 1.500 0 0 1 30 6v20H0z" fill="#e8a512"/><path d="M0 7h30v19a1.500 1.500 0 0 1-1.500 1.500h-27A1.500 1.500 0 0 1 0 26z" fill="#ffcf48"/><path d="M5 27.500V22a2 2 0 0 1 2-2h16a2 2 0 0 1 2 2v5.500z" fill="#1478cf"/><path d="M9 24h12" stroke="#0b4f94" stroke-width="1.500"/></svg></span>
    <span class="run"><svg width="30" height="30" viewBox="0 0 30 30"><circle cx="15" cy="15" r="14.500" fill="url(#edgeG)"/><path d="M1 14C4 6 16 5 18 13c-3-2-8 0-8 6 0 5 4 9 9 10C8 31-1 24 1 14z" fill="#0c59a4"/><path d="M18 13c2 2 0 4 0 5 1 4 9 3 12-1-1 2-1 4-2 6-4 4-16 2-16-6 0-4 4-6 6-4z" fill="#202224"/></svg></span>
    <span class="run act"><svg width="30" height="30"><use href="#excel"/></svg></span>
  </div>
  <div class="tray">
    <svg width="21" height="21" viewBox="0 0 21 21"><path d="M9 0l8 3v7c0 5-4 8-8 10-4-2-8-5-8-10V3z" fill="#1c94e6"/><path d="M9 0v20c-4-2-8-5-8-10h16V3z" fill="#54b8f5" opacity=".6"/><circle cx="14" cy="14.500" r="6" fill="#12a21c"/><path d="M11 14.500l2.500 2.500 4-4.500" fill="none" stroke="#fff" stroke-width="1.500"/></svg>
    <svg width="18" height="21" viewBox="0 0 18 21"><path d="M0 1h18v15l-9 5-9-5z" fill="#000"/><text x="2" y="10" font-size="9" font-weight="700" textLength="14" lengthAdjust="spacingAndGlyphs" fill="#fff">EPIC</text><text x="3" y="15" font-size="4" textLength="12" lengthAdjust="spacingAndGlyphs" fill="#fff">GAMES</text></svg>
    <svg width="21" height="21" viewBox="0 0 21 21"><circle cx="10.500" cy="10.500" r="10" fill="#174f91"/><circle cx="13.500" cy="7.500" r="3.500" fill="none" stroke="#fff" stroke-width="2"/><path d="M1 10l7 3 4-2M4 13.500l4 2" stroke="#fff" stroke-width="3.500" fill="none"/></svg>
    <div class="lang"><span>ESP</span><span>LAA</span></div>
    <svg width="21" height="18" viewBox="0 0 21 18"><path d="M1 6.500a13.500 13.500 0 0 1 19 0M4 10a9 9 0 0 1 13 0M7 13.200a5 5 0 0 1 7 0" fill="none" stroke="#fff" stroke-width="1.500"/><circle cx="10.500" cy="15.500" r="1.700" fill="#fff"/></svg>
    <svg width="20" height="18" viewBox="0 0 20 18"><path d="M1 6h3.500L9 2v14l-4.500-4H1z" fill="none" stroke="#fff" stroke-width="1.400"/><path d="M12 6c1.500 2 1.500 4 0 6M14.500 3.500c3 3.500 3 7.500 0 11" fill="none" stroke="#fff" stroke-width="1.400"/><path d="M17 1.500c4 5 4 10 0 15" fill="none" stroke="#777" stroke-width="1.400"/></svg>
    <svg width="22" height="19" viewBox="0 0 22 19"><rect x="2" y="6" width="16" height="11" rx="2.500" fill="none" stroke="#fff" stroke-width="1.500"/><path d="M5 9h10v5H5z" fill="#fff"/><path d="M19.500 9.500v4" stroke="#fff" stroke-width="2"/><path d="M4 0L0 7h3l-1 5 5-7H4z" fill="#fff"/></svg>
    <div class="clock"><span>20:53</span><span>1/11/2022</span></div>
    <svg width="19" height="19" viewBox="0 0 19 19"><path d="M10 2C5 1 3 4 3 8v4l-2 3h15l-2-3v-1M6 16c1 2 4 2 5 0M7 8h4l-4 4h4M13 1h4l-4 5h4" fill="none" stroke="#fff" stroke-width="1.400"/></svg>
  </div>
</footer>
</body>
</html>
```
FILE: styles.css
```css
* { box-sizing: border-box; }
html, body { margin: 0; }
body { width: 1920px; height: 1080px; overflow: hidden; background: #0a0a0a; color: #fff; font: 15px "Open Sans", "Noto Sans", sans-serif; display: flex; flex-direction: column; }
svg { display: block; flex: none; }
.defs { position: absolute; }
span, b, i, u { white-space: nowrap; }

/* title bar */
.titlebar { height: 60px; flex: none; display: flex; align-items: center; padding-left: 20px; font-size: 14.5px; letter-spacing: -.06px; }
.t-auto { width: 97px; margin-left: 21px; }
.toggle { width: 54px; height: 25px; margin-left: 8px; border: 1.5px solid #ddd; border-radius: 13px; background: #292929; padding: 2px 3px; }
.toggle i { display: block; width: 18px; height: 18px; border-radius: 50%; background: #fff; }
.save { margin-left: 14px; }
.t-file { width: 186px; margin-left: 24px; }
.file-chev { margin-left: 4px; }
.search { width: 518px; height: 40px; margin: 0 0 0 229px; border-radius: 5px; background: #202020; display: flex; align-items: center; padding-left: 26px; gap: 17px; color: #b8b8b8; font-size: 15px; letter-spacing: .25px; }
.search span { margin-top: -3px; }
.user { width: 223px; margin-left: 172px; letter-spacing: -.15px; }
.avatar { width: 30px; height: 30px; margin-left: 13px; border-radius: 50%; background: #4f6bed; font-size: 11.500px; display: flex; align-items: center; justify-content: center; }
.pen { margin-left: 33px; }
.wb { margin-left: 41px; }
.wb + .wb { margin-left: 46px; }

/* ribbon tabs */
.tabs { height: 38px; flex: none; display: grid; grid-template-columns: 74px 64px 81px 190px 93px 68px 77px 60px 904px 149px 135px; padding-left: 10px; align-items: center; font-size: 16px; letter-spacing: 0; }
.tabs .disp { letter-spacing: .2px; }
.tabs .on { font-weight: 700; letter-spacing: -.5px; width: 42px; height: 33px; line-height: 28px; margin-top: 5px; border-bottom: 3px solid #9fd9bb; }
.btn { height: 30px; margin-top: -1px; border-radius: 5px; display: flex; align-items: center; gap: 5px; padding-left: 9px; font-weight: 600; font-size: 16px; letter-spacing: -.15px; }
.comments { width: 139px; background: #292929; border: 1px solid #666; }
.share { width: 135px; background: #107c41; padding-left: 9px; }
.sc { margin-left: 8px; }

/* ribbon */
.ribbon { height: 124px; flex: none; margin: 0 10px; border: 1px solid #616161; border-radius: 10px; background: #292929; display: flex; padding-top: 5px; font-size: 14.5px; letter-spacing: -.1px; }
.group { height: 111px; border-right: 1px solid #5c5c5c; display: flex; flex-direction: column; }
.body { height: 99px; display: flex; }
.label { height: 12px; line-height: 14px; font-size: 12.500px; letter-spacing: -.1px; text-align: center; position: relative; }
.label svg { position: absolute; right: 4px; top: 2px; }
.g-undo { width: 74px; } .g-undo .body { flex-direction: column; margin-top: -3px; margin-bottom: 3px; }
.g-undo .label { padding-left: 3px; }
.r-undo { height: 32px; display: grid; grid-template-columns: 30px 16px; padding-left: 14px; align-items: center; justify-items: center; }
.dim { color: #555; }
.g-clip { width: 124px; } .g-clip .label, .g-font .label, .g-align .label, .g-num .label { padding-right: 21px; }
.big { display: flex; flex-direction: column; align-items: center; line-height: 20px; }
.big > span { display: flex; align-items: center; height: 20px; gap: 4px; }
.paste { width: 70px; padding-top: 3px; }
.paste > svg:first-child { margin-left: 8px; }
.paste > span { margin-top: 5px; } .paste > svg:last-child { margin-top: 5px; }
.col { display: flex; flex-direction: column; margin-top: -3px; }
.r-clip { height: 32px; display: grid; grid-template-columns: 26px 20px; align-items: center; justify-items: center; margin-left: -4px; }
.stack { display: flex; flex-direction: column; }
.combo { height: 31px; border: 1px solid #616161; border-radius: 5px; display: flex; align-items: center; justify-content: space-between; padding: 0 3px 0 2px; font-size: 14.5px; }
em { width: 1px; height: 30px; background: #5c5c5c; display: block; }
.g-font { width: 291px; }
.r-font1 { margin: 8px 0 0 10px; display: grid; grid-template-columns: 144px 63px 18px 17px; column-gap: 2px; align-items: center; }
.r-font1 > svg:nth-of-type(1) { margin-left: 5px; } .r-font1 > svg:nth-of-type(2) { margin-left: 19px; }
.r-font2 { margin: 9px 0 0 8px; height: 30px; display: grid; grid-template-columns: 32px 32px 34px 14px 6px 32px 16px 10px 28px 16px 40px 8px; align-items: center; justify-items: center; color: #c8c8c8; font-size: 16px; }
.r-font2 svg { color: #fff; }
.r-font2 .end { justify-self: end; }
.g-align { width: 384px; }
.r-al { display: grid; height: 31px; width: 179px; padding-left: 10px; grid-template-columns: 32px 32px 32px 3px 32px 10px; align-items: center; justify-items: center; margin-top: 8px; }
.r-al2 { grid-template-columns: 32px 32px 32px 3px 32px 32px; }
.sel { width: 30px; height: 31px; border: 1px solid #a0a0a0; border-radius: 5px; background: #3b3b3b; display: flex; align-items: center; justify-content: center; }
.tall { height: 78px; margin-top: 7px; }
.r-w1 { height: 31px; display: grid; grid-template-columns: 25px 141px 8px; align-items: center; padding-left: 12px; margin-top: 8px; }
.comb { letter-spacing: -.25px; }
.g-num { width: 200px; }
.r-num1 { margin: 8px 9px 0 10px; }
.r-num2 { margin: 9px 0 0 10px; height: 30px; display: grid; grid-template-columns: 32px 12px 44px 20px 14px 22px 42px; align-items: center; justify-items: center; }
.g-styles { width: 283px; }
.g-styles .body { display: grid; grid-template-columns: 109px 87px 86px; }
.g-styles .big, .g-edit .big { padding-top: 3px; }
.g-styles .big > span:nth-of-type(1), .g-edit .big > span:nth-of-type(1) { margin-top: 4px; }
.g-styles .big:nth-child(1) { padding-left: 4px; } .g-styles .big:nth-child(2) { padding-left: 4px; }
.g-cells { width: 135px; } .triple { flex-direction: column; margin-top: -3px; margin-bottom: 3px; }
.r-cell { height: 32px; display: grid; grid-template-columns: 25px 64px 10px; padding-left: 15px; align-items: center; }
.c2 { grid-template-columns: 25px 69px 10px; } .c3 { grid-template-columns: 25px 60px 10px; }
.c1 span, .c2 span, .c3 span { letter-spacing: -.25px; }
.g-edit { width: 237px; }
.g-edit .body { display: grid; grid-template-columns: 53px 86px 81px; }
.r-ed { height: 32px; display: grid; grid-template-columns: 30px 14px; padding-left: 10px; align-items: center; justify-items: center; }
.g-an { width: 79px; }
.g-an .body { justify-content: center; } .g-an .big { padding-top: 2px; } .g-an .big > span:nth-of-type(1) { margin-top: 3px; }
.collapse { margin: 96px 0 0 67px; }

/* formula bar */
.formula { height: 30px; flex: none; margin: 10px 10px 0; display: flex; align-items: center; }
.fbox { height: 30px; border: 1px solid #555; border-radius: 5px; background: #292929; display: flex; align-items: center; }
.name { width: 127px; padding: 0 6px; justify-content: space-between; font-size: 14.500px; letter-spacing: -.4px; }
.dots { margin: 0 10px 0 11px; }
.fx { width: 92px; margin: 0 5px 0 0; padding: 0 6px 0 7px; justify-content: space-between; }
.fx i { font: italic 22px "Liberation Serif", serif; color: #e0e0e0; }
.bar { flex: 1; justify-content: flex-end; padding-right: 4px; color: #ccc; }

/* sheet */
.sheet { height: 694px; flex: none; margin-top: 8px; display: flex; }
.left { width: 34px; display: flex; flex-direction: column; overflow: hidden; }
.corner { height: 24px; border-right: 1px solid #888; border-bottom: 1px solid #888; background: linear-gradient(135deg, transparent 50%, #777 50%) no-repeat 14px 5px / 16px 16px; flex: none; }
.rows span { display: block; height: 24px; line-height: 24px; border-bottom: 1px solid #8a8a8a; border-right: 1px solid #888; font-size: 15.500px; text-align: center; color: #e0e0e0; background: #0a0a0a; }
.rows .on { background: #666; border-right: 2px solid #1e7145; }
.mid { width: 1861px; }
.cols { height: 24px; display: flex; border-bottom: 1px solid #999; overflow: hidden; }
.cols span { width: 104px; flex: none; text-align: center; line-height: 24px; font-size: 15.500px; border-right: 1px solid #5c5c5c; color: #e0e0e0; }
.cols .on { background: #666; border-bottom: 2px solid #1e7145; }
.canvas { height: 670px; position: relative; overflow: hidden; background: #808080; font-family: Lato, "Open Sans", sans-serif; }
.kpis { display: flex; gap: 104px; padding-left: 103px; }
.kpi { width: 312px; text-align: center; color: #000; font-size: 15px; }
.kpi b { display: block; height: 23px; line-height: 23px; letter-spacing: .25px; padding-left: 2px; }
.kpi div { height: 96px; line-height: 97px; background: #0d0d0d; color: #fff; font-size: 34.500px; font-weight: 900; }
.cellsel { position: absolute; left: 1350px; top: 286px; width: 107px; height: 26px; border: 2px solid #1e7145; box-shadow: inset 0 0 0 1px #fff; }
.cellsel i { position: absolute; right: -3px; bottom: -3px; width: 6px; height: 6px; background: #1e7145; border: 1px solid #fff; border-right: 0; border-bottom: 0; }
.dash { position: absolute; left: 0; top: 123px; width: 1377px; height: 560px; background: #767171; }
.brand { position: absolute; left: 0; top: 128px; font-family: Lato, sans-serif; }
.panel { position: absolute; border: 3px solid #080808; border-radius: 16px; background: linear-gradient(#474342, #373332); box-shadow: 2px 4px 5px rgba(0,0,0,.4), 0 -1px 1px rgba(255,255,255,.15); }
.p-anos { left: 759px; top: 135px; width: 603px; height: 94px; background: #3d3938; }
.p-envio { left: 759px; top: 242px; width: 296px; height: 205px; }
.p-estatus { left: 1068px; top: 242px; width: 295px; height: 205px; }
.p-gerente { left: 759px; top: 461px; width: 296px; height: 206px; }
.p-razon { left: 1068px; top: 461px; width: 295px; height: 206px; }
.p-tipo { left: 13px; top: 241px; width: 182px; height: 152px; }
.p-trim { left: 13px; top: 405px; width: 182px; height: 152px; }
.p-chart { left: 206px; top: 241px; width: 540px; height: 316px; }
.p-low1 { left: 13px; top: 569px; width: 182px; height: 150px; }
.p-low2 { left: 206px; top: 570px; width: 540px; height: 200px; }
.chart { position: absolute; left: 228px; top: 252px; background: radial-gradient(ellipse 260px 240px at 50% 50%, #595959, #474747 50%, #292929); }
.ax { font: 13.500px Lato, sans-serif; fill: #d9d9d9; }
.ax.dark { fill: #111; }
.stacked { position: absolute; left: 0; top: 574px; background: radial-gradient(ellipse 265px 240px at 50% 100%, #595959, #4a4a4a 50%, #292929); }

.slicer { position: absolute; background: #fff; border: 1px solid #8c8c8c; color: #000; padding: 0 10px; display: flex; flex-direction: column; font-size: 16.500px; }
.slicer header { height: 33px; flex: none; border-bottom: 1px solid #999; display: flex; align-items: center; gap: 18px; padding: 0 3px 1px 0; font-size: 16.200px; letter-spacing: .1px; }
.slicer header b { flex: 1; min-width: 0; }
.items { margin-top: 5px; display: flex; justify-content: space-between; overflow: hidden; }
.list { flex: 1; display: flex; flex-direction: column; gap: 4px; }
.list span { height: 31px; flex: none; line-height: 28px; padding: .5px 0 0 10px; background: #bfbfbf; border: 1px solid #999; border-radius: 4px; }
.list .faded { color: #444; }
.scroll { width: 22px; margin-left: 5px; background: #f0f0f0; }
.scroll i { display: block; width: 8px; margin: 23px auto 0; background: #858585; }
.s-anos { left: 781px; top: 139px; width: 556px; height: 82px; }
.s-anos .list { flex-direction: row; } .s-anos .list span { flex: 1; } .s-anos .scroll { margin-left: 6px; }
.s-envio { left: 785px; top: 264px; width: 240px; height: 152px; }
.s-estatus { left: 1101px; top: 264px; width: 240px; height: 123px; }
.s-gerente { left: 794px; top: 467px; width: 240px; height: 186px; }
.s-gerente .items { height: 135px; } .s-gerente .scroll i { height: 66px; }
.s-razon { left: 1099px; top: 467px; width: 240px; height: 195px; }
.s-tipo { left: 27px; top: 247px; width: 153px; height: 147px; }
.s-tipo header { height: 34px; }
.s-tipo .items { height: 96px; } .s-tipo .scroll i { height: 33px; }
.s-trim { left: 20px; top: 407px; width: 172px; height: 146px; }
.s-trim header { height: 34px; }
.s-trim .items { height: 95px; } .s-trim .scroll i { height: 16px; }
.tip { position: absolute; left: 1121px; top: 591px; width: 122px; height: 25px; line-height: 25px; text-align: center; font-size: 15.500px; color: #888; background: rgba(235,235,235,.65); box-shadow: 2px 2px 3px rgba(0,0,0,.3); }
.strip { position: absolute; background: linear-gradient(90deg, #2d2d2d, #4d4d4d 50%, #2b2b2b); }
.st1 { left: 487px; top: 653px; width: 329px; height: 20px; }
.st2 { left: 816px; top: 663px; width: 291px; height: 10px; }
.st3 { left: 1107px; top: 666px; width: 429px; height: 6px; background: linear-gradient(90deg, #4d4d4d 30%, #2b2b2b); }
.blank { position: absolute; left: 869px; top: 634px; width: 121px; height: 50px; background: #fff; border: 1px solid #bbb; }
.vscroll { width: 25px; display: flex; flex-direction: column; align-items: center; padding-top: 6px; background: #0a0a0a; }
.vscroll i { width: 10px; height: 458px; margin-top: 5px; border-radius: 5px; background: #999; }
.vscroll svg:last-child { margin-top: 203px; }

/* sheet tabs */
.sheettabs { height: 29px; flex: none; background: #262626; border-top: 1px solid #a0a0a0; display: flex; border-bottom: 1px solid #404040; }
.nav1 { margin: 8px 0 0 27px; }
.t1 { margin-left: 40px; border-left: 1px solid #aaa; width: 93px; height: 22px; margin-top: 2px; line-height: 17px; padding-left: 18px; font-size: 15.800px; letter-spacing: .1px; }
.t2 { width: 120px; height: 26px; margin-top: -1px; line-height: 23px; text-align: center; color: #1e7145; font-weight: 700; font-size: 16px; letter-spacing: .1px; padding-left: 4px; background: #fff; border-bottom: 2px solid #1e7145; }
.plus { margin: 3px 0 0 32px; }
.hdots { width: 29px; margin-left: 767px; background: #0a0a0a; display: flex; align-items: center; padding-left: 12px; }
.hscroll { width: 732px; height: 24px; background: #0f0f0f; display: flex; align-items: center; padding: 0 5px; }
.hscroll i { width: 649px; height: 11px; border-radius: 5px; background: #999; margin: 0 auto 0 5px; }

/* status bar */
.status { height: 28px; flex: none; background: #141414; border-bottom: 1px solid #474747; display: flex; align-items: center; font-size: 12.800px; letter-spacing: -.1px; }
.listo { margin-left: 9px; width: 52px; padding-top: 1px; }
.acct { margin-left: 3px; width: 1465px; padding-top: 1px; }
.view { width: 50px; height: 27px; display: flex; align-items: center; justify-content: center; }
.view.on { background: #262626; }
.zoombar { margin-left: 6px; }
.pct { margin-left: 15px; padding-top: 1px; }

/* taskbar */
.taskbar { height: 59px; flex: none; background: #202224; display: flex; align-items: center; font-size: 14px; letter-spacing: -.2px; padding-bottom: 2px; }
.moon { margin-left: 25px; }
.weather { width: 90px; margin-left: 8px; display: flex; flex-direction: column; line-height: 20px; letter-spacing: .1px; }
.weather span:first-child { letter-spacing: -.2px; }
.weather span:last-child { color: #c0c0c0; }
.apps { display: flex; gap: 5px; margin-left: 616px; }
.apps span { width: 50px; height: 50px; border-radius: 5px; display: flex; align-items: center; justify-content: center; position: relative; }
.apps .run::after { content: ""; position: absolute; bottom: 1px; width: 8px; height: 4px; border-radius: 2px; background: #999; }
.apps .act { background: #2f3031; border: 1px solid #3a3a3a; }
.apps .act::after { width: 20px; background: #bbb; }
.tray { display: grid; grid-template-columns: 30px 28px 24px 67px 29px 30px 28px 79px 28px; margin-left: 404px; align-items: center; }
.lang, .clock { display: flex; flex-direction: column; line-height: 20px; text-align: center; }
.lang { padding-right: 6px; }
.clock { text-align: right; margin-right: 3px; letter-spacing: -.3px; }
.tray svg:last-child { margin-left: 7px; }
```
